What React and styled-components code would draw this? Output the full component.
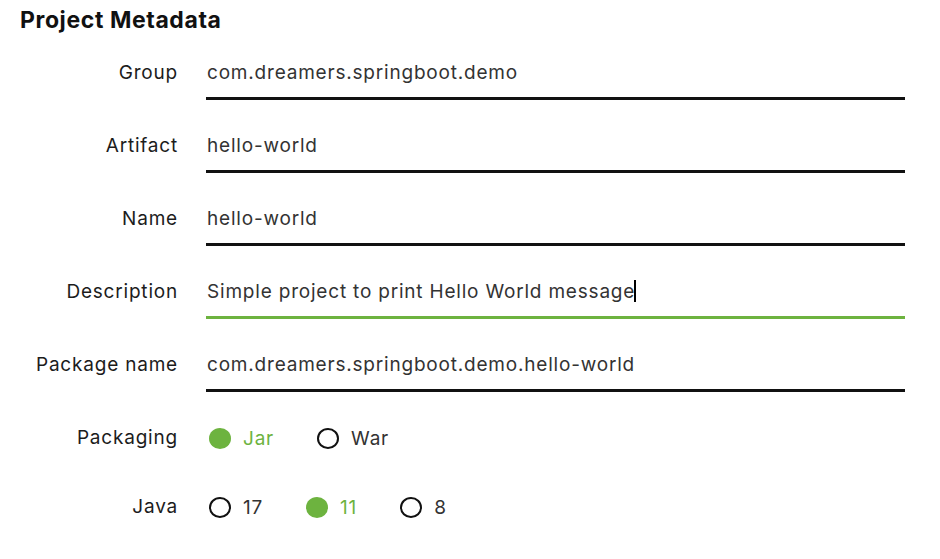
import React from 'react';
import styled, {createGlobalStyle} from 'styled-components';

const GlobalStyle = createGlobalStyle`
  body {
    margin: 0;
    background: #fff;
    font-family: Inter, "Liberation Sans", sans-serif;
    color: #222;
  }
`;

const Page = styled.div`
  width: 940px;
  height: 559px;
  padding: 6px 0 0 20px;
  box-sizing: border-box;
  overflow: hidden;
`;

const Title = styled.h2`
  margin: 0 0 16px;
  font-size: 23px;
  font-weight: 700;
  letter-spacing: 0.6px;
  line-height: 28px;
  color: #111;
`;

const Form = styled.div`
  display: flex;
  flex-direction: column;
  gap: 23px;
`;

const Row = styled.div`
  display: grid;
  grid-template-columns: 158px 699px;
  column-gap: 28px;
  align-items: start;
`;

const Label = styled.div`
  text-align: right;
  font-size: 19px;
  letter-spacing: 0.8px;
  line-height: 46px;
  color: #1c1c1c;
`;

const Value = styled.div`
  height: 47px;
  line-height: 46px;
  padding-left: 1px;
  font-size: 19px;
  letter-spacing: 0.8px;
  color: #333;
  border-bottom: 3px solid ${p => (p.$active ? '#6db33f' : '#111')};
  white-space: nowrap;
`;

const Caret = styled.span`
  display: inline-block;
  width: 2px;
  height: 22px;
  margin-left: -1px;
  background: #000;
  vertical-align: -4px;
`;

const RadioGroup = styled.div`
  display: flex;
  align-items: center;
  gap: 43px;
  height: 46px;
  padding-left: 3px;
`;

const RadioItem = styled.div`
  display: flex;
  align-items: center;
  gap: 12px;
  font-size: 19px;
  letter-spacing: 0.8px;
  color: ${p => (p.$checked ? '#6db33f' : '#333')};
`;

const Dot = styled.span`
  box-sizing: border-box;
  width: 22px;
  height: 21px;
  border-radius: 50%;
  background: ${p => (p.$checked ? '#6db33f' : 'transparent')};
  border: ${p => (p.$checked ? 'none' : '2.5px solid #111')};
`;

const fields = [
  {label: 'Group', value: 'com.dreamers.springboot.demo'},
  {label: 'Artifact', value: 'hello-world'},
  {label: 'Name', value: 'hello-world'},
  {label: 'Description', value: 'Simple project to print Hello World message', active: true},
  {label: 'Package name', value: 'com.dreamers.springboot.demo.hello-world'}
];

const Radios = ({options, selected}) => (
  <RadioGroup>
    {options.map(opt => (
      <RadioItem key={opt} $checked={opt === selected}>
        <Dot $checked={opt === selected} />
        {opt}
      </RadioItem>
    ))}
  </RadioGroup>
);

const App = () => {
  return (
    <Page>
      <GlobalStyle />
      <Title>Project Metadata</Title>
      <Form>
        {fields.map(f => (
          <Row key={f.label}>
            <Label>{f.label}</Label>
            <Value $active={f.active}>
              {f.value}
              {f.active && <Caret />}
            </Value>
          </Row>
        ))}
        <Row>
          <Label>Packaging</Label>
          <Radios options={['Jar', 'War']} selected='Jar' />
        </Row>
        <Row>
          <Label>Java</Label>
          <Radios options={['17', '11', '8']} selected='11' />
        </Row>
      </Form>
    </Page>
  );
};

export default App;
